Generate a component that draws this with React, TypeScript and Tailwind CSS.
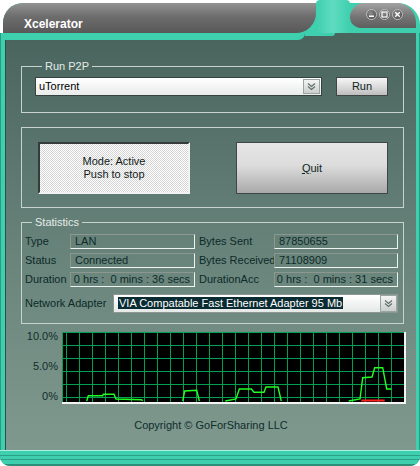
import React from "react";

const seg1 = "24.7,69 26.3,63.7 40.7,63.7 41.3,62.3 52,62.3 54,67 79.7,67.7 80.5,69";
const seg2 = "120.7,69 122.7,59 134.7,58.3 137.3,69";
const seg3 = "163.3,69 174,67 177.3,57 189.3,57 192,60.3 202,60.3 204,55 216,55 219.3,69";
const seg4 = "286.7,69 298,67 300.7,45.7 310,45 312.7,35.7 320.7,35.7 324.7,57 329.3,57";

const vLines = Array.from({ length: 26 }, (_, i) => 4.5 + i * 13);
const hLines = [0.5, 13.5, 26.5, 39.5, 52.5, 65.5];

function Chevrons() {
  return (
    <svg width="9" height="9" viewBox="0 0 9 9">
      <path d="M1 1.5 L4.5 4.5 L8 1.5 M1 4.5 L4.5 7.5 L8 4.5" fill="none" stroke="#5f6d6b" strokeWidth="1.1" />
    </svg>
  );
}

function Field({ children, right }: { children: React.ReactNode; right?: boolean }) {
  return (
    <div
      className={`h-[15px] flex items-center border border-t-[#8c978f] border-l-[#8c978f] border-b-[#eef3ef] border-r-[#eef3ef] leading-[13px] ${
        right ? "justify-end pr-[4px]" : "pl-[4px]"
      }`}
    >
      {children}
    </div>
  );
}

function TitleButton({ kind }: { kind: "min" | "max" | "close" }) {
  return (
    <span className="w-[11px] h-[11px] rounded-full border border-[#bdbdbd] bg-[radial-gradient(circle_at_40%_35%,#8e8e8e,#3f3f3f)] flex items-center justify-center">
      <svg width="7" height="7" viewBox="0 0 7 7">
        {kind === "min" && <rect x="1" y="4.5" width="5" height="1.5" fill="#fff" />}
        {kind === "max" && <rect x="1" y="1" width="5" height="5" fill="none" stroke="#fff" strokeWidth="1.2" />}
        {kind === "close" && <path d="M1.2 1.2 L5.8 5.8 M5.8 1.2 L1.2 5.8" stroke="#fff" strokeWidth="1.3" />}
      </svg>
    </span>
  );
}

export default function App() {
  return (
    <div className="w-[420px] h-[466px] overflow-hidden bg-white font-['Liberation_Sans',Arial,sans-serif] text-[11px] text-[#0c2a28]">
      {/* title bar */}
      <div className="flex h-[33px]">
        <div className="mt-[3px] ml-[3px] w-[313px] rounded-tl-[20px] bg-[#3ecfae]">
          <div className="h-full rounded-tl-[20px] rounded-br-[20px] bg-[linear-gradient(to_bottom,#939393,#6d6d6d_45%,#585858)] pl-[21px] pt-[14px] text-[12px] leading-[14px] font-bold text-white">
            Xcelerator
          </div>
        </div>
        <div className="w-[34px] rounded-t-[4px] bg-[linear-gradient(to_right,#3ecfae,#5fdcc0_50%,#3ecfae)]" />
        <div className="w-[70px] pt-[3px]">
          <div className="h-[30px] rounded-tr-[22px] bg-[#3ecfae]">
            <div className="w-[66px] h-[25px] rounded-tl-[16px] rounded-tr-[22px] rounded-bl-[12px] bg-[linear-gradient(to_bottom,#a2a2a2,#747474_55%,#5e5e5e)] flex gap-[2px] pl-[16px] pt-[6px]">
              <TitleButton kind="min" />
              <TitleButton kind="max" />
              <TitleButton kind="close" />
            </div>
          </div>
        </div>
      </div>

      {/* window body */}
      <div className="h-[433px] flex flex-col rounded-b-[10px] bg-[#3ecfae] pl-[5px] pr-[4px] shadow-[inset_1px_0_0_#2a9a80,inset_-1px_0_0_#2a9a80]">
        {/* wavy top edge of the panel */}
        <div className="h-[7px] flex bg-[#4a655e]">
          <div className="w-[300px] rounded-br-[10px] bg-[#3ecfae]" />
          <div className="w-[30px] h-[3px] rounded-br-[8px] bg-[#3ecfae]" />
        </div>
        <div className="h-[410px] flex flex-col border-l border-[#2b5048] bg-[linear-gradient(to_bottom,#4a655e,#6a857c_55%,#80998f)]">
          {/* Run P2P */}
          <fieldset className="mt-[20px] ml-[15px] w-[383px] border border-[#c8d2ce] pl-[13px] pt-[4px] pb-[16px]">
            <legend className="ml-[7px] px-[3px] leading-[13px] text-[#e4ece8]">Run P2P</legend>
            <div className="flex gap-[14px]">
              <div className="w-[287px] h-[19px] flex border border-[#34433f] bg-[linear-gradient(to_bottom,#ffffff,#e9ecea)]">
                <span className="flex-1 pl-[3px] leading-[17px] text-black">uTorrent</span>
                <span className="w-[17px] m-[1px] flex items-center justify-center border border-[#9aa5a2] bg-[linear-gradient(to_bottom,#f4f4f4,#c9cfcd)]">
                  <Chevrons />
                </span>
              </div>
              <button className="w-[52px] h-[19px] border border-[#3f4746] bg-[linear-gradient(to_bottom,#f6f6f6,#d6d6d6_60%,#bdbdbd)] leading-[17px] text-[#0d2424]">
                Run
              </button>
            </div>
          </fieldset>

          {/* Mode / Quit */}
          <fieldset className="mt-[14px] ml-[15px] w-[383px] border border-[#c8d2ce] pl-[16px] pt-[14px] pb-[13px]">
            <div className="flex justify-between pr-[15px]">
              <button className="w-[152px] h-[52px] flex flex-col items-center justify-center border-2 border-t-[#353b3a] border-l-[#353b3a] border-b-[#f2f2f2] border-r-[#f2f2f2] bg-[repeating-conic-gradient(#ffffff_0_25%,#d4d4d4_0_50%)] bg-[length:2px_2px] leading-[13px] text-[#121a1a]">
                <span>Mode: Active</span>
                <span>Push to stop</span>
              </button>
              <button className="w-[152px] h-[52px] border border-[#3f4746] bg-[linear-gradient(to_bottom,#e6e6e6,#dcdcdc_45%,#a9a9a9)] text-[#0d2424]">
                <span className="underline">Q</span>uit
              </button>
            </div>
          </fieldset>

          {/* Statistics */}
          <fieldset className="mt-[8px] ml-[15px] w-[383px] border border-[#c8d2ce] pl-[3px] pr-[4px] pt-[5px] pb-[10px]">
            <legend className="ml-[7px] px-[3px] leading-[13px] text-[#e4ece8]">Statistics</legend>
            <div className="grid grid-cols-[45px_125px_79px_124px] gap-y-[4px] items-center leading-[13px]">
              <span>Type</span>
              <Field>LAN</Field>
              <span className="pl-[4px]">Bytes Sent</span>
              <Field>87850655</Field>

              <span>Status</span>
              <Field>Connected</Field>
              <span className="pl-[4px] whitespace-nowrap">Bytes Received</span>
              <Field>71108909</Field>

              <span>Duration</span>
              <Field right>0 hrs :&nbsp; 0 mins : 36 secs</Field>
              <span className="pl-[4px]">DurationAcc</span>
              <Field right>0 hrs :&nbsp; 0 mins : 31 secs</Field>
            </div>
            <div className="mt-[7px] flex items-center">
              <span className="w-[88px] leading-[13px]">Network Adapter</span>
              <div className="w-[285px] h-[19px] flex items-center border border-[#8c978f] bg-[linear-gradient(to_bottom,#ffffff,#e4e9e6)] pl-[4px]">
                <span className="flex-1">
                  <span className="bg-[#0a2b31] px-[1px] leading-[12px] text-white">VIA Compatable Fast Ethernet Adapter 95 Mb</span>
                </span>
                <span className="w-[17px] h-[17px] flex items-center justify-center border border-[#9aa5a2] bg-[linear-gradient(to_bottom,#f4f4f4,#c9cfcd)]">
                  <Chevrons />
                </span>
              </div>
            </div>
          </fieldset>

          {/* chart */}
          <div className="mt-[6px] ml-[19px] flex gap-[4px]">
            <div className="w-[33px] h-[72px] flex flex-col justify-between items-end leading-[12px] text-[11px] text-[#0f2d2b]">
              <span>10.0%</span>
              <span>5.0%</span>
              <span>0%</span>
            </div>
            <svg width="344" height="72" viewBox="0 0 344 72" className="mt-[2px]">
              <rect x="0" y="0" width="342" height="70" fill="#000" />
              {vLines.map((x) => (
                <line key={x} x1={x} y1="0" x2={x} y2="70" stroke="#00a050" strokeWidth="1" />
              ))}
              <line x1="0.5" y1="0" x2="0.5" y2="70" stroke="#00a050" strokeWidth="1" />
              {hLines.map((y) => (
                <line key={y} x1="0" y1={y} x2="342" y2={y} stroke="#00a050" strokeWidth="1" />
              ))}
              <polyline points={seg1} fill="none" stroke="#22ff22" strokeWidth="1.4" />
              <polyline points={seg2} fill="none" stroke="#22ff22" strokeWidth="1.4" />
              <polyline points={seg3} fill="none" stroke="#22ff22" strokeWidth="1.4" />
              <polyline points={seg4} fill="none" stroke="#22ff22" strokeWidth="1.4" />
              <line x1="299.3" y1="68.5" x2="322.7" y2="68.5" stroke="#ff2020" strokeWidth="2" />
              <rect x="0" y="70" width="344" height="2" fill="#f4f4f4" />
              <rect x="342" y="0" width="2" height="72" fill="#f4f4f4" />
            </svg>
          </div>

          <div className="mt-[14px] text-center leading-[14px] text-[#0f2d2b]">Copyright © GoForSharing LLC</div>
        </div>

        {/* bottom frame */}
        <div className="flex-1 -ml-[5px] -mr-[4px] rounded-b-[10px] bg-[linear-gradient(to_bottom,#a8efe0_0,#a8efe0_1px,#3ecfae_1px,#3ecfae_5px,#2c9f86_5px,#2c9f86_6px,#3ecfae_6px,#3ecfae_9px,#2c9f86_9px,#2c9f86_10px,#3ecfae_10px,#3ecfae_14px,#2a8f78_14px)]" />
      </div>
    </div>
  );
}
